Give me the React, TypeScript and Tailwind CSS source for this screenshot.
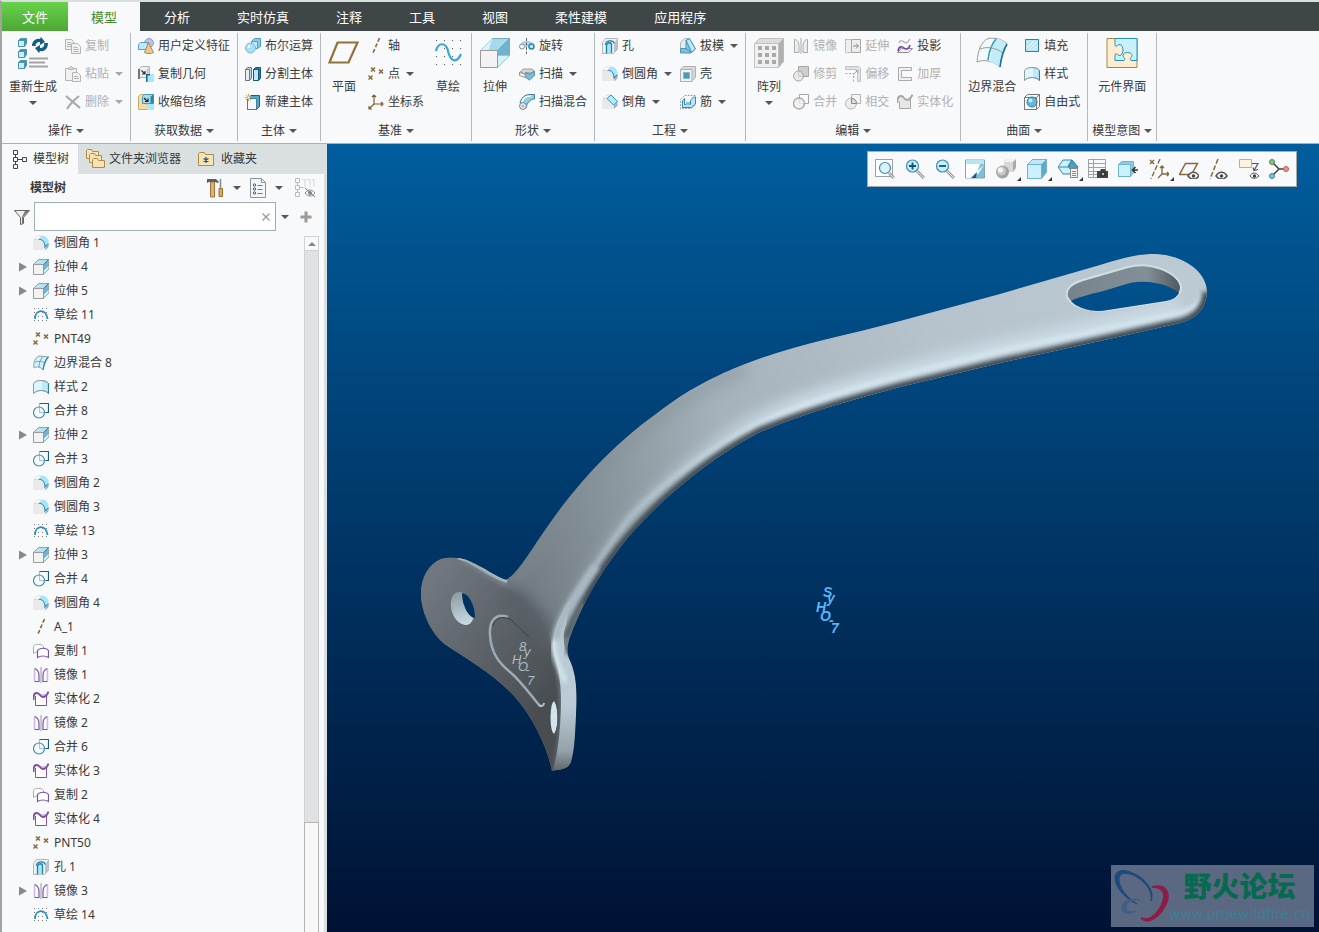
import { useState } from "react";
import type { ReactNode } from "react";

// 16px icons, shared by the ribbon and the model tree
const icons: Record<string, ReactNode> = {
  copy: (
    <g fill="#f1f1f1" stroke="#b4b4b4">
      <path d="M.5 1.500h6l2 2v8h-8z" />
      <path d="M2 4.500h4M2 6.500h4M2 8.500h4" />
      <path d="M6.500 5.500h6l3 3v7h-9z" />
      <path d="M8.500 9.500h4M8.500 11.500h5M8.500 13.500h5" />
    </g>
  ),
  paste: (
    <g fill="#f1f1f1" stroke="#b4b4b4">
      <path d="M.5 2.500h11v12h-11z" />
      <path d="M3.500 3.500v-1.500l2.500-1.500 2.500 1.500v1.500z" fill="#ddd" />
      <path d="M7.500 6.500h5l3 3v6h-8z" />
      <path d="M9 10.500h4M9 12.500h5" />
    </g>
  ),
  remove: <path d="M1 2l14 12M14 2C9 6 5 10 2 15" fill="none" stroke="#a9a9a9" strokeWidth="2.200" />,
  udf: (
    <g>
      <circle cx="11" cy="5" r="4.500" fill="#b9c3ea" stroke="#8f9ccb" />
      <path d="M.5 6.500l2-2h7v7h-9z" fill="#bfe9fa" stroke="#5c9dc0" />
      <path d="M10.500 4.500l5 10c-2 1.500-7 1.500-9 0z" fill="#e8c98f" stroke="#a98a54" />
    </g>
  ),
  copyGeom: (
    <g>
      <path d="M.5 3.500l3-3h8v8l-3 3h-8z" fill="#f0f0f0" stroke="#b0b0b0" />
      <path d="M8.500 3.500l3-3v8h-3z" fill="#c9c9c9" />
      <path d="M0 3h2v10H0z" fill="#6f7478" />
      <path d="M3.500 4.500l3 3M7 5v3H4" fill="none" stroke="#333" strokeWidth="1.200" />
      <path d="M8 8h8v8H8z" fill="#a6e7fb" />
      <path d="M8 8h4v1.500H9.500V16H8z" fill="#14688f" />
    </g>
  ),
  shrink: (
    <g>
      <path d="M.5 2.500l2-2h6v10h4l-2 5h-10z" fill="#f3dca6" stroke="#c9a868" />
      <path d="M4.500 2.500l2-2h9v9h-11z" fill="#a5dbee" stroke="#4a9cc0" />
      <path d="M12.500 2.500l3-2v9h-3z" fill="#2f86ad" />
      <path d="M6 4l3 3M10 4.500v3H7" fill="none" stroke="#222" strokeWidth="1.200" />
      <path d="M9 10h7v6H9z" fill="#a6e7fb" />
    </g>
  ),
  boolean: (
    <g stroke="#4f9ec0">
      <path d="M6.500 3.500l3-3h6v8l-3 2h-6z" fill="#8ccbe4" />
      <path d="M6.500 3.500h6v7h-6z" fill="#c5ecfa" />
      <circle cx="5.500" cy="10" r="5" fill="#a9dff2" stroke="#7fb9d0" />
      <circle cx="4" cy="8.500" r="1.500" fill="#eaf9ff" stroke="none" />
    </g>
  ),
  split: (
    <g stroke="#777">
      <path d="M.5 3.500l2-2h4v11l-2 2h-4z" fill="#b9d2db" />
      <path d="M.5 3.500h4v11h-4z" fill="#e9eff1" />
      <path d="M8.500 3.500l2-2h5v11l-2 2h-5z" fill="#2a7fa8" stroke="#16577a" />
      <path d="M8.500 3.500h5v11h-5z" fill="#bdeafa" stroke="#16577a" />
    </g>
  ),
  newBody: (
    <g>
      <path d="M2.500 4.500l3-3h9v11l-3 3h-9z" fill="#58a6c8" stroke="#195f82" />
      <path d="M2.500 4.500h9v11h-9z" fill="#f4f8fa" stroke="#3c7f9f" />
      <path d="M3.500 0v7M0 3.500h7M1 1l5 5M6 1L1 6" stroke="#ef9a1f" />
      <circle cx="3.500" cy="3.500" r="1.200" fill="#fff2b8" />
    </g>
  ),
  axis: <path d="M11.500 0L4.500 16" fill="none" stroke="#86683a" strokeWidth="1.600" strokeDasharray="4 2" />,
  point: (
    <path
      d="M3 1.500l4 4M7 1.500l-4 4M11 3.500l4 4M15 3.500l-4 4M.5 9.500l4 4M4.500 9.500l-4 4"
      fill="none"
      stroke="#86683a"
      strokeWidth="1.500"
    />
  ),
  csys: (
    <path
      d="M6 1v9h9M6 10l-5 5M4 3l2-2 2 2M13 8l2 2-2 2M1 12v3h3"
      fill="none"
      stroke="#7c5f30"
      strokeWidth="1.200"
    />
  ),
  revolve: (
    <g fill="none">
      <path d="M2 5c3-3 8-3 12 0v6c-3-3-8-3-12 0z" fill="#a8d5e5" />
      <circle cx="3" cy="8.500" r="2.500" fill="#f7f7f7" stroke="#8a8a8a" />
      <circle cx="12.500" cy="8.500" r="2.500" fill="#c8effb" stroke="#2a86ad" strokeWidth="1.500" />
      <path d="M7.500 0v16" stroke="#666" strokeDasharray="3 1.500" />
    </g>
  ),
  sweep: (
    <g stroke="#9a9a9a">
      <path d="M.5 6.500l4-3.500h8l3 2-4 2-5-.500-1 1z" fill="#d4d4d4" />
      <path d="M6 7l5 1 4.500-2.500v4l-5 4.500-4.500-3z" fill="#7fbdd6" stroke="#4b94b3" />
      <path d="M.5 6.500L6 8v3.500L.5 9.500z" fill="#f3f3f3" />
    </g>
  ),
  blend: (
    <g>
      <path d="M1 9C2 4 6 .5 10 .5h5.500V5C11 5 8 9 7 14z" fill="#8fd0e8" stroke="#4a7f98" />
      <path d="M3 8c1-4 4-6 9-6" fill="none" stroke="#fff" strokeWidth="1.500" />
      <circle cx="4" cy="12" r="3.400" fill="#f5f5f5" stroke="#777" />
      <path d="M2.500 12h3M4 10.500v3" stroke="#999" />
    </g>
  ),
  hole: (
    <g>
      <path d="M.5 4.500l3-4h12v11l-4 4h-11z" fill="#eef0f1" stroke="#b5b5b5" />
      <path d="M12 5l3.500-4v10.500L12 15z" fill="#bcc3c7" />
      <path d="M4.500 15.500V6L7 3.500h3L9.500 15.500z" fill="#a9e4f7" />
      <path d="M3.500 7c0-5 8-5.500 8.500-1.500M4.500 15.500V7c1-3 5-3 5 0v8" fill="none" stroke="#1e83ac" strokeWidth="1.300" />
    </g>
  ),
  round: (
    <g>
      <path d="M0 5l5-4h5c4 0 6 4 6 8v1l-4 5H0z" fill="#e9e9e9" />
      <path d="M5 4L9 .5c4 0 7 4 6.500 9L12 12c0-5-3-8-7-8z" fill="#a6e5fb" />
      <path d="M5 4c4 0 7 3 7 8l3.500-3" fill="none" stroke="#2f8fb8" strokeWidth="1.200" />
      <path d="M1 4.500L5 1h4l-4 3.500z" fill="#fff" stroke="#bcd0d8" strokeWidth=".6" />
      <path d="M12.500 12l3-2v2l-3 3.500z" fill="#9fb0b8" />
    </g>
  ),
  chamfer: (
    <g>
      <path d="M0 5l5-4h5l6 7v3l-4 4H0z" fill="#e9e9e9" />
      <path d="M1 4.500L5 1h4L5 4.500z" fill="#fff" stroke="#bcd0d8" strokeWidth=".6" />
      <path d="M5 4.500L9 1l6.500 6.500L11.500 11z" fill="#b5ebfb" stroke="#2f8fb8" />
      <path d="M12 11.500l3.500-3v3L12 15z" fill="#9fb0b8" />
    </g>
  ),
  draft: (
    <g>
      <path d="M.5 4.500l4-4h4v10h-8z" fill="#e9ecee" stroke="#b5b5b5" />
      <path d="M.5 10.500h10l4 .5-3.500 4H.5z" fill="#7fbdd8" stroke="#4d97b6" />
      <path d="M6 2.500l3.500-2 6 10.500-4 3.500z" fill="#b5ebfb" stroke="#3d86a8" />
      <path d="M6 2.500v8l5.500 4z" fill="#8dcce5" stroke="#4d97b6" />
    </g>
  ),
  shell: (
    <g>
      <path d="M.5 3.500l3-3h12v11l-4 4h-11z" fill="#d5d9db" stroke="#b0b0b0" />
      <path d="M.5 3.500h11.500v12H.5z" fill="#f1f1f1" stroke="#b0b0b0" />
      <path d="M3.500 6.500h6v6h-6z" fill="#4c96b8" stroke="#7fb9d0" />
    </g>
  ),
  rib: (
    <g fill="none">
      <path d="M.5 5.500l4-4h11v9l-4 4h-11z" stroke="#8a8a8a" strokeDasharray="1.500 1.500" />
      <path d="M4.500 4.500v6h6v-4l3-3.500h2v7l-4 3.500h-9v-7z" fill="#b7e6f6" stroke="#3b88aa" />
      <path d="M6 8h4v3H6z" fill="#7fc3df" />
    </g>
  ),
  mirrorGray: (
    <g fill="#ededed" stroke="#aaa">
      <path d="M1.500 1.500c3 0 4.500 3 4.500 7v6H1.500zM14.500 1.500c-3 0-4.500 3-4.500 7v6h4.500z" />
      <path d="M8 0v16" />
    </g>
  ),
  trimGray: (
    <g fill="#e3e3e3" stroke="#a5a5a5">
      <path d="M5.500.5h10v10h-10z" fill="#cecece" />
      <circle cx="5.500" cy="10" r="5" fillOpacity=".7" />
    </g>
  ),
  mergeGray: (
    <g fill="none" stroke="#a5a5a5">
      <path d="M6.500.5h9v9h-9z" />
      <circle cx="6" cy="9.500" r="5.500" fill="#eee" fillOpacity=".8" strokeWidth="1.300" />
    </g>
  ),
  extendGray: (
    <g fill="#eee" stroke="#a5a5a5">
      <path d="M.5 1.500h6v13h-6z" strokeDasharray="2 1" />
      <path d="M6.500 1.500h9v13h-9z" />
      <path d="M8 8h5M11 5.500L13.500 8 11 10.500" fill="none" stroke="#888" />
    </g>
  ),
  offsetGray: (
    <g fill="none" stroke="#a5a5a5">
      <path d="M.5.500h13l2 2v13h-3V6c0-2-1-2.500-3-2.500h-9z" fill="#e2e2e2" stroke="#c2c2c2" />
      <path d="M.5 7.500h8v8" strokeDasharray="2 1.500" />
      <path d="M8.500 8.500l4-4M10.500 4.500h2.500v2.500" />
    </g>
  ),
  intersectGray: (
    <g stroke="#b5b5b5">
      <path d="M6.500.5h9v9h-9z" fill="#f4f4f4" />
      <circle cx="6" cy="9.500" r="5.500" fill="#ececec" />
      <path d="M6.500 4.500v5h5c0-3-2-5-5-5z" fill="#ddd" stroke="#888" />
    </g>
  ),
  project: (
    <g fill="none">
      <path d="M2 5c1-3 3-3 5-1s4 0 6-3" stroke="#b0b0b0" strokeWidth="1.300" />
      <path d="M.5 14.500l4-4h11l-4 4z" fill="#eee" stroke="#8d8d8d" />
      <path d="M1 13c1-5 4-5 6-3s5 1 6-3" stroke="#7446b0" strokeWidth="1.600" />
    </g>
  ),
  thickenGray: (
    <path d="M1.500 1.500h13v3h-10v7h10v3h-13z" fill="#f0f0f0" stroke="#aaa" />
  ),
  solidGray: (
    <g fill="#e6e6e6" stroke="#a5a5a5">
      <path d="M2.500 5v9.500h11V5" />
      <path d="M.5 9V6C1 1 5 1 7 4s6 3 8.500-3.500" strokeWidth="1.800" />
    </g>
  ),
  fill: (
    <g>
      <path d="M1.500 1.500h13v12h-13z" fill="#b6e8f9" stroke="#2683aa" />
      <path d="M3 10l7-7M5 12l8-8M9 12l4-4" stroke="#eefbff" />
    </g>
  ),
  style: (
    <g>
      <path d="M.5 4.500C3 .5 13 .5 15.500 4.500v10c-3-4-12-4-15 0z" fill="#bdeafa" stroke="#8b9ba3" />
      <path d="M.5 14.500v-10C3 .5 8 1 9 2v9c-3-.5-6 1-8.500 3.500z" fill="#dff5fd" />
      <path d="M15.500 4v11" stroke="#2d81a4" strokeWidth="1.300" />
      <path d="M.5 4.500C3 .5 13 .5 15.500 4.500M.5 4.500v10c3-4 12-4 15 0" fill="none" stroke="#8b9ba3" />
    </g>
  ),
  freestyle: (
    <g fill="none" stroke="#777">
      <circle cx="8" cy="8" r="5" fill="#5fb7da" stroke="#2c83a8" />
      <circle cx="6.500" cy="6.500" r="2" fill="#c8f0ff" stroke="none" />
      <path d="M.5 3.500l3-3h12v12l-3 3H.5zM.5 3.500h12v12M12.500 3.500l3-3" />
    </g>
  ),
  extrude: (
    <g>
      <path d="M.5 5.500l5-5h10v10l-5 5z" fill="#b7e2f2" stroke="#8aa7b3" />
      <path d="M10.500 5.500l5-5v10l-5 5z" fill="#6fb3d0" stroke="#8aa7b3" />
      <path d="M10.500 15l5-5v-3l-5 5z" fill="#d3f2fb" />
      <path d="M.5 5.500h10v10H.5z" fill="#f2f2f2" stroke="#9a9a9a" />
      <path d="M15.500.5l-5 5" stroke="#2c7ea1" />
    </g>
  ),
  sketch: (
    <g>
      <path d="M1 1.500h14M1 5.500h14M1 9.500h14M1 13.500h14" stroke="#777" strokeDasharray="1 3" />
      <path d="M2 12C2 2 13 1 14.500 12" fill="none" stroke="#2a8fc0" strokeWidth="1.800" />
    </g>
  ),
  boundary: (
    <g fill="none">
      <path d="M1 13C0 7 2 3 6 1l9.500 1C12 5 11 9 10 15 8 12 4 11 1 13z" fill="#d3f1fa" stroke="#8aa2ad" />
      <path d="M10 1.500C7 5 6 8 6 12.500M2 7c4-1 7-1 10 1" stroke="#6fa5bb" />
      <path d="M15.500 2C12 5 11 9 10 15" stroke="#2a82a8" strokeWidth="1.200" />
    </g>
  ),
  merge: (
    <g fill="none">
      <path d="M6.500.5h9v9h-9z" stroke="#9fc6d6" />
      <path d="M6.500.5h9v9h-3" stroke="#155f86" strokeWidth="1.200" />
      <circle cx="6" cy="9.500" r="5.500" stroke="#3e8cb0" strokeWidth="1.200" />
    </g>
  ),
  copied: (
    <g fill="#fff">
      <path d="M.5 10.500v-7c2-3 8-3 10 0v7c-3-2-8-2-10 0z" stroke="#aaa" />
      <path d="M4.500 14.500v-7c2-3 9-3 11 0v7c-3-2-8-2-11 0z" stroke="#7b55a3" strokeWidth="1.200" />
    </g>
  ),
  mirror: (
    <g fill="none" stroke="#7b55a3">
      <path d="M1.500 14V2.500M14.500 14V2.500" stroke="#cbb9ea" strokeWidth="1.500" />
      <path d="M1.500 1.500c3 1 4.500 3 4.500 7v6H1.500M14.500 1.500c-3 1-4.500 3-4.500 7v6h4.500" strokeWidth="1.200" />
      <path d="M8 0v16" stroke="#999" />
    </g>
  ),
  solid: (
    <g fill="none" stroke="#7b55a3">
      <path d="M2.500 5v9.500h11V5" fill="#fff" />
      <path d="M7 3h7c-1 4-5 4-7 1z" fill="#d3c2ef" stroke="none" />
      <path d="M.5 9V6C1 1 5 1 7 4s6 3 8.500-3.500" strokeWidth="2" />
    </g>
  ),
};

// 32px icons for the big ribbon buttons
const bigIcons: Record<string, ReactNode> = {
  regen: (
    <g>
      {[1, 12, 23].map((y) => (
        <g key={y} transform={`translate(1 ${y})`} stroke="#4d93b2">
          <path d="M.5 2.500l2-2h6v5l-2 3h-6z" fill="#3f8fb3" />
          <path d="M.5 2.500h6v6h-6z" fill="#c4eefb" />
        </g>
      ))}
      <path d="M15 9C15 4 19 1 23 2l1-2 4 5-5 3v-3c-3 0-5 2-4 4z" fill="#155f80" />
      <path d="M31 6c0 6-4 9-8 8l-1 2-4-5 5-3v3c3 0 5-2 4-5z" fill="#155f80" />
      <path d="M12 21.500h19M12 25.500h16M12 29.500h19" stroke="#a3a3a3" strokeWidth="2" />
    </g>
  ),
  plane: <path d="M9.500 5.500h20l-9 20h-19z" fill="none" stroke="#92713a" strokeWidth="2.200" />,
  sketch: (
    <g>
      <path d="M4 3.500h26M4 11.500h26M4 19.500h26M4 27.500h26" stroke="#555" strokeDasharray="1 7" />
      <path d="M4 14C6 5 14 5 16 14s8 14 13 3" fill="none" stroke="#3aa6d8" strokeWidth="2.200" />
    </g>
  ),
  extrude: (
    <g>
      <path d="M1.500 13.500l12-12h17v17l-12 12z" fill="#aadff2" stroke="#77aabd" />
      <path d="M18.500 13.500l12-12v17h-12z" fill="#70b3cf" />
      <path d="M18.500 18.500h12l-12 12z" fill="#d3f2fb" stroke="#9ac5d4" />
      <path d="M13.500 1.500l-12 12h17l12-12z" fill="#a5daec" stroke="#77aabd" />
      <path d="M13.500 1.500l-12 12h8z" fill="#daf3fb" />
      <path d="M1.500 13.500h17v17h-17z" fill="#f3f3f3" stroke="#999" />
    </g>
  ),
  pattern: (
    <g>
      <path d="M1.500 6.500l5-5h24v23l-5 6h-24z" fill="#dcdcdc" stroke="#c2c2c2" />
      <path d="M25.500 6.500l5-5v23l-5 6z" fill="#b0b0b0" />
      <path d="M1.500 6.500h24v24h-24z" fill="#f0f0f0" stroke="#c2c2c2" />
      {[9, 16, 23].map((y) => (
        <path key={y} d={`M5 ${y}h4v4H5zM12 ${y}h4v4h-4zM19 ${y}h4v4h-4z`} fill="#a9a9a9" />
      ))}
    </g>
  ),
  boundary: (
    <g fill="none">
      <path d="M1 25C2 13 5 5 12 1.500c6-1 13 0 19 5C27 14 25 21 24 30 17 24 8 22 1 25z" fill="#f3f8fa" stroke="#9a9a9a" />
      <path d="M21 2c4 0 7 2 10 5-4 7-6 14-7 23-3-2-6-4-10-5 1-10 3-18 7-23z" fill="#c3ecf9" />
      <path d="M20 2c-5 6-7 13-8 21" stroke="#2a9cc6" strokeWidth="1.600" />
      <path d="M4 12c8-3 16-1 23 4" stroke="#9a9a9a" />
      <path d="M31 7c-4 7-6 14-7 23" stroke="#1d6f94" strokeWidth="1.600" />
    </g>
  ),
  component: (
    <g>
      <path d="M1 1.500h30v29H1z" fill="#fdeccd" stroke="#a8834b" />
      <path
        d="M9 1.500h22v22h-6c-2-2 1-3 1-5 0-4-9-4-9 0 0 2 3 3 1 5H9v-6c2-2 2 1 5 1 4-1 4-10 0-11-3 0-3 3-5 1z"
        fill="#c9f1fd"
        stroke="#2a8fb8"
      />
    </g>
  ),
};

const graphicsTools: { label: string; menu?: boolean; icon: ReactNode }[] = [
  {
    label: "重新调整",
    icon: (
      <g fill="none">
        <path d="M.5.500h17v17H.5z" fill="#fff" stroke="#9f9f9f" />
        <path d="M14 14l5 5" stroke="#999" strokeWidth="3" />
        <path d="M14 14l5 5" stroke="#eee" />
        <circle cx="10" cy="9" r="5.500" fill="#d8f3fc" stroke="#3a8cb0" strokeWidth="1.200" />
      </g>
    ),
  },
  {
    label: "放大",
    icon: (
      <g fill="none">
        <path d="M12 12l7 7" stroke="#999" strokeWidth="3" />
        <path d="M12 12l7 7" stroke="#eee" />
        <circle cx="7.500" cy="7" r="6" fill="#c7eefb" stroke="#3a8cb0" strokeWidth="1.200" />
        <path d="M4 7h7M7.500 3.500v7" stroke="#0e5375" strokeWidth="1.800" />
      </g>
    ),
  },
  {
    label: "缩小",
    icon: (
      <g fill="none">
        <path d="M12 12l7 7" stroke="#999" strokeWidth="3" />
        <path d="M12 12l7 7" stroke="#eee" />
        <circle cx="7.500" cy="7" r="6" fill="#c7eefb" stroke="#3a8cb0" strokeWidth="1.200" />
        <path d="M4 7h7" stroke="#0e5375" strokeWidth="1.800" />
      </g>
    ),
  },
  {
    label: "重画",
    icon: (
      <g>
        <path d="M.5 1h19v18H.5z" fill="#7fc0d9" stroke="#7fa3b1" />
        <path d="M1 5h14c-1 5-4 9-8 14H1z" fill="#fff" />
        <path d="M19 6l-8 7-3 5 5-3z" fill="#eef9fd" />
        <path d="M12 13l-6 6h5z" fill="#155f86" />
        <path d="M1 1h18v4H1z" fill="#b9e4f2" />
      </g>
    ),
  },
  {
    label: "渲染",
    menu: true,
    icon: (
      <g>
        <path d="M8 3l3-3h9v9l-3 4H8z" fill="#a9a9a9" />
        <path d="M8 3l3-3h9l-3 3z" fill="#f2f2f2" />
        <path d="M8 3h9v10H8z" fill="#d8d8d8" />
        <circle cx="6.500" cy="13" r="6.500" fill="#a3a3a3" />
        <circle cx="5.500" cy="12" r="4.500" fill="#c9c9c9" />
        <circle cx="4.500" cy="11" r="2.500" fill="#f4f4f4" />
      </g>
    ),
  },
  {
    label: "显示样式",
    menu: true,
    icon: (
      <g stroke="#6fb3cf">
        <path d="M.5 5.500l5-5h14v13l-5 6H.5z" fill="#62a9c6" />
        <path d="M.5 5.500l5-5h14l-5 5z" fill="#bce8f7" />
        <path d="M.5 5.500h14v14H.5z" fill="#c9f0fc" />
      </g>
    ),
  },
  {
    label: "已保存方向",
    menu: true,
    icon: (
      <g stroke="#3b86a8">
        <path d="M5 1h9l6 7-4 7H5L0 8z" fill="#c9f0fc" />
        <path d="M14 1l6 8-8 1-2-3z" fill="#4f9fc2" />
        <path d="M0 8h11l3-7" fill="none" />
        <path d="M12.500 9.500h7v9h-7z" fill="#f4f4f4" stroke="#888" />
        <path d="M14 12.500h4M14 14.500h4M14 16.500h4" stroke="#888" />
      </g>
    ),
  },
  {
    label: "视图管理器",
    icon: (
      <g fill="none" stroke="#a0a0a0">
        <path d="M.5.500h17v18H.5zM.5 4.500h17M.5 8.500h17M.5 12.500h17M.5 15.500h10M5.500.500v18" />
        <path d="M9 12h3l1-2h4l1 2h2v7H9z" fill="#444" stroke="none" />
        <circle cx="15" cy="15" r="2" fill="#bbb" stroke="#111" />
      </g>
    ),
  },
  {
    label: "剖面",
    icon: (
      <g>
        <path d="M.5 5.500l3-3h12v11l-3 4H.5z" fill="#8ccbe4" stroke="#6fb3cf" />
        <path d="M.5 5.500h12v12H.5z" fill="#c9f0fc" stroke="#6fb3cf" />
        <path d="M20 11h-5M17.500 8l-3 3 3 3" fill="none" stroke="#333" strokeWidth="1.600" />
      </g>
    ),
  },
  {
    label: "基准显示",
    menu: true,
    icon: (
      <g fill="none" stroke="#86683a" strokeWidth="1.400">
        <path d="M1 1l4 4M5 1L1 5" />
        <path d="M11 0L2 20" strokeDasharray="5 2" />
        <path d="M13 7v8h7M13 15l-4 4M11 9l2-2 2 2M18 13l2 2-2 2" />
      </g>
    ),
  },
  {
    label: "平面显示",
    icon: (
      <g fill="none" stroke="#86683a" strokeWidth="1.500">
        <path d="M6.500 4.500h12l-6 11h-12z" />
        <path d="M9 17c3-5 8-5 11 0-3 4-8 4-11 0z" fill="#fff" stroke="#555" />
        <circle cx="14.500" cy="17" r="1.800" fill="#444" stroke="none" />
      </g>
    ),
  },
  {
    label: "轴显示",
    icon: (
      <g fill="none" stroke="#86683a" strokeWidth="1.500">
        <path d="M9 0L1 20" strokeDasharray="5 2" />
        <path d="M7 17c3-5 8-5 11 0-3 4-8 4-11 0z" fill="#fff" stroke="#555" />
        <circle cx="12.500" cy="17" r="1.800" fill="#444" stroke="none" />
      </g>
    ),
  },
  {
    label: "注释显示",
    icon: (
      <g fill="none">
        <path d="M.5.500h12v8H.5z" fill="#fdf3de" stroke="#c5ab80" />
        <path d="M13 4.500h6l-4 7M14 8.500l1 3 4-1" stroke="#555" strokeWidth="1.200" />
        <path d="M11 17c2-4 6-4 9 0-3 3-7 3-9 0z" fill="#fff" stroke="#555" />
        <circle cx="15.500" cy="17" r="1.800" fill="#444" />
      </g>
    ),
  },
  {
    label: "旋转中心",
    icon: (
      <g>
        <path d="M3 3l7 7h7M10 10l-7 7" fill="none" stroke="#444" strokeWidth="1.500" />
        <circle cx="3" cy="3" r="2.500" fill="#8cc08a" stroke="#4a8a4e" />
        <circle cx="3" cy="17" r="2.500" fill="#7fc0e0" stroke="#3a83a8" />
        <circle cx="17" cy="10" r="2.500" fill="#f1948b" stroke="#c3554e" />
      </g>
    ),
  },
];

const tabs = ["分析", "实时仿真", "注释", "工具", "视图", "柔性建模", "应用程序"];

const treeItems = [
  { icon: "round", label: "倒圆角 1" },
  { icon: "extrude", label: "拉伸 4", open: true },
  { icon: "extrude", label: "拉伸 5", open: true },
  { icon: "sketch", label: "草绘 11" },
  { icon: "point", label: "PNT49" },
  { icon: "boundary", label: "边界混合 8" },
  { icon: "style", label: "样式 2" },
  { icon: "merge", label: "合并 8" },
  { icon: "extrude", label: "拉伸 2", open: true },
  { icon: "merge", label: "合并 3" },
  { icon: "round", label: "倒圆角 2" },
  { icon: "round", label: "倒圆角 3" },
  { icon: "sketch", label: "草绘 13" },
  { icon: "extrude", label: "拉伸 3", open: true },
  { icon: "merge", label: "合并 4" },
  { icon: "round", label: "倒圆角 4" },
  { icon: "axis", label: "A_1" },
  { icon: "copied", label: "复制 1" },
  { icon: "mirror", label: "镜像 1" },
  { icon: "solid", label: "实体化 2" },
  { icon: "mirror", label: "镜像 2" },
  { icon: "merge", label: "合并 6" },
  { icon: "solid", label: "实体化 3" },
  { icon: "copied", label: "复制 2" },
  { icon: "solid", label: "实体化 4" },
  { icon: "point", label: "PNT50" },
  { icon: "hole", label: "孔 1" },
  { icon: "mirror", label: "镜像 3", open: true },
  { icon: "sketch", label: "草绘 14" },
];

function Icon({ name }: { name: string }) {
  return (
    <svg viewBox="0 0 16 16" className="size-4 shrink-0" aria-hidden="true">
      {icons[name]}
    </svg>
  );
}

function Caret({ muted }: { muted?: boolean }) {
  return (
    <svg viewBox="0 0 8 8" className="size-2 shrink-0" aria-hidden="true">
      <path d="M0 2h8L4 6z" fill={muted ? "#a8a8a8" : "#555"} />
    </svg>
  );
}

function Group({ title, children }: { title: string; children: ReactNode }) {
  return (
    <section className="my-[2px] flex shrink-0 flex-col border-r border-[#b3b9bc]">
      <div className="flex h-[87px] shrink-0 justify-center gap-2 px-[7px]">{children}</div>
      <button className="flex flex-1 items-center justify-center gap-1 px-1">
        {title}
        <Caret />
      </button>
    </section>
  );
}

function Big({ icon, label, menu }: { icon: string; label: string; menu?: boolean }) {
  return (
    <button className="flex min-w-8 flex-col items-center self-start pt-1">
      <svg viewBox="0 0 32 32" className="size-8" aria-hidden="true">
        {bigIcons[icon]}
      </svg>
      <span className="mt-[10px] leading-4">{label}</span>
      {menu && (
        <span className="mt-1">
          <Caret />
        </span>
      )}
    </button>
  );
}

function Column({ children }: { children: ReactNode }) {
  return <div className="-mt-px flex flex-col self-start">{children}</div>;
}

function Small({ icon, label, menu, off }: { icon: string; label: string; menu?: boolean; off?: boolean }) {
  return (
    <button disabled={off} className="flex h-7 items-center gap-1 text-[#3a3a3a] disabled:text-[#b1b1b1]">
      <Icon name={icon} />
      {label}
      {menu && (
        <span className="ml-[2px]">
          <Caret muted={off} />
        </span>
      )}
    </button>
  );
}

function Ribbon() {
  return (
    <div className="flex h-[113px] overflow-hidden border-b border-[#a9b3b5] bg-[#f8f9fb]">
      <Group title="操作">
        <Big icon="regen" label="重新生成" menu />
        <Column>
          <Small icon="copy" label="复制" off />
          <Small icon="paste" label="粘贴" menu off />
          <Small icon="remove" label="删除" menu off />
        </Column>
      </Group>
      <Group title="获取数据">
        <Column>
          <Small icon="udf" label="用户定义特征" />
          <Small icon="copyGeom" label="复制几何" />
          <Small icon="shrink" label="收缩包络" />
        </Column>
      </Group>
      <Group title="主体">
        <Column>
          <Small icon="boolean" label="布尔运算" />
          <Small icon="split" label="分割主体" />
          <Small icon="newBody" label="新建主体" />
        </Column>
      </Group>
      <Group title="基准">
        <Big icon="plane" label="平面" />
        <Column>
          <Small icon="axis" label="轴" />
          <Small icon="point" label="点" menu />
          <Small icon="csys" label="坐标系" />
        </Column>
        <Big icon="sketch" label="草绘" />
      </Group>
      <Group title="形状">
        <Big icon="extrude" label="拉伸" />
        <Column>
          <Small icon="revolve" label="旋转" />
          <Small icon="sweep" label="扫描" menu />
          <Small icon="blend" label="扫描混合" />
        </Column>
      </Group>
      <Group title="工程">
        <Column>
          <Small icon="hole" label="孔" />
          <Small icon="round" label="倒圆角" menu />
          <Small icon="chamfer" label="倒角" menu />
        </Column>
        <Column>
          <Small icon="draft" label="拔模" menu />
          <Small icon="shell" label="壳" />
          <Small icon="rib" label="筋" menu />
        </Column>
      </Group>
      <Group title="编辑">
        <Big icon="pattern" label="阵列" menu />
        <Column>
          <Small icon="mirrorGray" label="镜像" off />
          <Small icon="trimGray" label="修剪" off />
          <Small icon="mergeGray" label="合并" off />
        </Column>
        <Column>
          <Small icon="extendGray" label="延伸" off />
          <Small icon="offsetGray" label="偏移" off />
          <Small icon="intersectGray" label="相交" off />
        </Column>
        <Column>
          <Small icon="project" label="投影" />
          <Small icon="thickenGray" label="加厚" off />
          <Small icon="solidGray" label="实体化" off />
        </Column>
      </Group>
      <Group title="曲面">
        <Big icon="boundary" label="边界混合" />
        <Column>
          <Small icon="fill" label="填充" />
          <Small icon="style" label="样式" />
          <Small icon="freestyle" label="自由式" />
        </Column>
      </Group>
      <Group title="模型意图">
        <Big icon="component" label="元件界面" />
      </Group>
    </div>
  );
}

function ModelTree() {
  const [filter, setFilter] = useState("");

  return (
    <aside className="flex w-[325px] shrink-0 flex-col border-r-[3px] border-[#dae0df] bg-[#f8f9fb]">
      {/* Navigator tabs */}
      <div className="-mr-[3px] flex h-[30px] shrink-0 bg-[#dae0df]">
        <button className="flex items-center gap-[6px] bg-[#f8f9fb] pr-[9px] pl-[10px]">
          <svg viewBox="0 0 15 20" className="h-5 w-[15px]" fill="none" stroke="#444" aria-hidden="true">
            <path d="M1.500 1.500h4v4h-4zM1.500 8.500h4v4h-4zM1.500 15.500h4v4h-4zM10.500 8.500h4v4h-4zM3.500 5.500v3M3.500 12.500v3M5.500 10.500h5" />
          </svg>
          模型树
        </button>
        <button className="flex items-center gap-1 px-2">
          <svg viewBox="0 0 19 20" className="h-5 w-[19px]" fill="#f8e3b4" stroke="#b08c4c" aria-hidden="true">
            <path d="M.5 9.500v-8l1-1h4l1 2h6v7z" />
            <path d="M3.500 13.500v-8l1-1h4l1 2h6v7z" />
            <path d="M6.500 18.500v-8l1-1h4l1 2h6v7z" />
          </svg>
          文件夹浏览器
        </button>
        <button className="flex items-center gap-[6px] px-2">
          <svg viewBox="0 0 18 16" className="h-4 w-[18px]" aria-hidden="true">
            <path d="M1.500 14.500v-12l1-1h5l1 2h8v11z" fill="#f8e3b4" stroke="#b08c4c" />
            <path d="M9 6v6M6.500 7.500l5 3M11.500 7.500l-5 3" stroke="#155f86" strokeWidth="1.300" />
          </svg>
          收藏夹
        </button>
      </div>

      {/* Tree header */}
      <div className="flex h-7 shrink-0 items-center pr-[9px] pl-7">
        <h2 className="font-bold">模型树</h2>
        <button className="ml-auto flex items-center gap-[9px]" aria-label="设置">
          <svg viewBox="0 0 18 20" className="h-5 w-[18px]">
            <path d="M1 1h9l3 3-1 1-3-1H3L1 5z" fill="#555f68" />
            <path d="M4.500 4h4v15h-4z" fill="#dfb271" stroke="#a07438" />
            <path d="M14.500 1v9" stroke="#888" strokeWidth="1.500" />
            <path d="M13 10.500h3.500v8H13z" fill="#dfa757" stroke="#9a6e32" />
          </svg>
          <Caret />
        </button>
        <button className="ml-[9px] flex items-center gap-2" aria-label="显示">
          <svg viewBox="0 0 17 20" className="h-5 w-[17px]" fill="none" stroke="#8795a0">
            <path d="M.5.500h11l4 4v15H.5z" fill="#f3f7f9" />
            <path d="M11.500.500v4h4" />
            <circle cx="4.500" cy="7" r="1.200" stroke="#555" />
            <circle cx="4.500" cy="11" r="1.200" stroke="#555" />
            <circle cx="4.500" cy="15" r="1.200" stroke="#555" />
            <path d="M7.500 7.500h5M7.500 11.500h5M7.500 15.500h5" stroke="#777" />
          </svg>
          <Caret />
        </button>
        <button className="ml-3" aria-label="隐藏">
          <svg viewBox="0 0 20 20" className="size-5" fill="none" stroke="#bbb">
            <path d="M.5.500h4v4h-4zM.5 7.500h4v4h-4zM.5 14.500h4v4h-4zM2.500 4.500v3M2.500 11.500v3M4.500 9.500h4" />
            <path d="M7 1.500h3v8M12 1.500h3v6M17 1.500h2v7" stroke="#d5d5d5" />
            <path d="M10 15c3-4 7-4 10 0-3 4-7 4-10 0z" stroke="#888" />
            <circle cx="15" cy="15" r="2" fill="#888" stroke="none" />
            <path d="M10 10l10 9" stroke="#777" />
          </svg>
        </button>
      </div>

      {/* Filter */}
      <div className="flex h-[29px] shrink-0 items-center px-3">
        <svg viewBox="0 0 16 16" className="mr-1 size-4 shrink-0" aria-hidden="true">
          <path d="M.5 1.500h15l-6 7v6l-3 1v-7z" fill="#eee" stroke="#666" />
          <path d="M11 2h4L9 8v6H8V8z" fill="#777" />
        </svg>
        <div className="flex h-[29px] min-w-0 flex-1 items-center border border-[#9fb0b0] bg-white pr-1">
          <input
            aria-label="筛选模型树"
            value={filter}
            onChange={(e) => setFilter(e.target.value)}
            className="h-full min-w-0 flex-1 px-2 outline-none"
          />
          <button aria-label="清除" onClick={() => setFilter("")}>
            <svg viewBox="0 0 10 10" className="size-[10px]">
              <path d="M1.500 1.500l7 7M8.500 1.500l-7 7" stroke="#999" strokeWidth="1.300" />
            </svg>
          </button>
        </div>
        <button className="ml-[5px] flex" aria-label="筛选选项">
          <Caret />
        </button>
        <button className="ml-[11px]" aria-label="添加">
          <svg viewBox="0 0 12 12" className="size-3">
            <path d="M6 .500v11M.5 6h11" stroke="#9a9a9a" strokeWidth="3" />
          </svg>
        </button>
      </div>

      <div className="flex min-h-0 flex-1">
        <ul className="min-w-0 flex-1 overflow-hidden">
          {treeItems.map((item) => (
            <li key={item.label} className="h-6">
              <button className="flex h-6 items-center gap-[5px] pl-4">
                <svg viewBox="0 0 10 10" className="size-[10px]" aria-hidden="true">
                  {item.open && <path d="M1 .500L9 5 1 9.500z" fill="#888" />}
                </svg>
                <Icon name={item.icon} />
                {item.label}
              </button>
            </li>
          ))}
        </ul>
        {/* Scroll bar */}
        <div className="mt-[5px] mr-[5px] flex w-[15px] flex-col border-x border-[#d0d2d3] bg-[#e0e1e3]">
          <button
            className="flex h-[15px] items-center justify-center border-y border-[#d0d2d3] bg-[#f8f9fb]"
            aria-label="向上滚动"
          >
            <svg viewBox="0 0 8 8" className="size-2">
              <path d="M0 6h8L4 2z" fill="#888" />
            </svg>
          </button>
          <div className="h-[82%]" />
          <div className="-mx-px flex-1 border-x border-t border-[#b5b5b5] bg-[#f8f8f8]" />
        </div>
      </div>
    </aside>
  );
}

const ARM =
  "M506 580C518 574 534 545 550 523C577 484 615 443 656 414C688 389 715 376 745 364C790 346 840 337 900 321L1000 294L1100 265C1125 257 1140 254 1155 254C1184 255 1207 272 1207 292C1206 308 1198 318 1180 323L1100 341L1000 363L900 387C850 400 800 415 760 432C715 455 672 490 640 524C610 556 585 596 570 637C566 648 567 655 571 663C577 678 577 695 576 715C575 740 574 752 571 762C568 770 560 769 552 771C548 750 535 720 515 697C495 675 470 661 446 645C430 633 421 610 421 594C421 577 429 564 441 559C450 557 462 557 471 562C483 567 498 578 506 580Z";

function PartModel() {
  return (
    <svg viewBox="327 144 992 788" className="h-full w-full" role="img" aria-label="零件模型">
      <defs>
        <linearGradient id="sky" gradientUnits="userSpaceOnUse" x1="0" y1="144" x2="0" y2="932">
          <stop offset="0" stopColor="#005e9e" />
          <stop offset="1" stopColor="#001234" />
        </linearGradient>
        <linearGradient id="armFill" gradientUnits="userSpaceOnUse" x1="530" y1="620" x2="1200" y2="280">
          <stop offset="0" stopColor="#6f7a81" />
          <stop offset="0.150" stopColor="#87939a" />
          <stop offset="0.350" stopColor="#a5b2bb" />
          <stop offset="0.650" stopColor="#b6c3cd" />
          <stop offset="1" stopColor="#bccad4" />
        </linearGradient>
        <linearGradient id="bandFill" gradientUnits="userSpaceOnUse" x1="560" y1="620" x2="800" y2="400">
          <stop offset="0" stopColor="#a9b8c1" stopOpacity=".3" />
          <stop offset="0.500" stopColor="#b9c9d3" stopOpacity=".6" />
          <stop offset="1" stopColor="#cbdbe5" />
        </linearGradient>
        <linearGradient id="rimFill" gradientUnits="userSpaceOnUse" x1="560" y1="640" x2="780" y2="410">
          <stop offset="0" stopColor="#a5b5bf" />
          <stop offset="0.500" stopColor="#b5c5ce" />
          <stop offset="1" stopColor="#d8e9f2" />
        </linearGradient>
        <linearGradient id="plateFill" gradientUnits="userSpaceOnUse" x1="425" y1="590" x2="560" y2="690">
          <stop offset="0" stopColor="#70777e" />
          <stop offset="0.500" stopColor="#5c6268" />
          <stop offset="1" stopColor="#484d50" />
        </linearGradient>
        <linearGradient id="sideFill" gradientUnits="userSpaceOnUse" x1="0" y1="640" x2="0" y2="770">
          <stop offset="0" stopColor="#b9cad4" />
          <stop offset="0.500" stopColor="#bccbd5" />
          <stop offset="0.850" stopColor="#94a2ab" />
          <stop offset="1" stopColor="#606970" />
        </linearGradient>
        <linearGradient id="slotWall" gradientUnits="userSpaceOnUse" x1="1067" y1="0" x2="1181" y2="0">
          <stop offset="0" stopColor="#77838b" />
          <stop offset="0.700" stopColor="#839097" />
          <stop offset="1" stopColor="#4e575c" />
        </linearGradient>
        <linearGradient id="holeWall" x1="0" y1="0" x2="0" y2="1">
          <stop offset="0" stopColor="#8e9ba3" />
          <stop offset="1" stopColor="#cbdce6" />
        </linearGradient>
        <filter id="soft2" x="-20%" y="-20%" width="140%" height="140%">
          <feGaussianBlur stdDeviation="2" />
        </filter>
        <filter id="soft6" x="-20%" y="-20%" width="140%" height="140%">
          <feGaussianBlur stdDeviation="7" />
        </filter>
        <clipPath id="armClip">
          <path d={ARM} />
        </clipPath>
      </defs>

      <path d={ARM} fill="url(#armFill)" />
      <g clipPath="url(#armClip)" fill="none">
        {/* lower bright band and the rolled dark edge under it */}
        <path
          d="M572 618C588 580 610 548 640 515C672 481 715 444 760 420C800 402 850 388 900 374L1000 349L1100 327L1180 308"
          stroke="url(#bandFill)"
          strokeWidth="18"
          filter="url(#soft6)"
        />
        <path
          d="M556 640C570 602 596 562 630 517C664 481 712 447 760 422C800 405 850 389 900 376L1000 351L1100 330L1180 313C1194 309 1201 302 1203 294"
          stroke="url(#rimFill)"
          strokeWidth="4"
          filter="url(#soft2)"
        />
        <path
          d="M569 638C585 596 610 556 640 524C672 490 715 455 760 432C800 415 850 400 900 387L1000 363L1100 341L1180 323C1198 318 1206 308 1207 292"
          stroke="#434c52"
          strokeWidth="9"
          filter="url(#soft2)"
        />
        <path
          d="M508 586C520 574 540 545 552 527C580 488 618 447 658 418C690 394 715 381 745 368"
          stroke="#7f8b92"
          strokeWidth="14"
          opacity=".45"
          filter="url(#soft6)"
        />
        {/* mounting plate */}
        <path
          d="M415 590L425 550L480 566L506 588C528 602 547 622 554 652C562 680 562 740 552 780L415 700Z"
          fill="url(#plateFill)"
          filter="url(#soft2)"
        />
        <path d="M506 592C530 606 546 624 552 650" stroke="#596167" strokeWidth="18" filter="url(#soft6)" />
        <path d="M458 557C475 561 490 577 507 581" stroke="#b7c7d1" strokeWidth="4" />
        <path d="M462 561C476 564 490 579 506 584" stroke="#7d8990" strokeWidth="3" filter="url(#soft2)" />
        <path
          d="M566 625C560 640 567 654 571 663C577 678 577 695 576 715C575 740 574 752 571 762L566 770H553C558 755 561 725 561 700C561 680 558 668 554 655C550 640 555 622 570 600Z"
          fill="url(#sideFill)"
        />
        <path d="M596 566C580 588 556 622 556 640" stroke="#a9b9c3" strokeWidth="8" filter="url(#soft2)" />
        <path d="M554 640C551 652 560 668 565 682" stroke="#d6e6ef" strokeWidth="5" filter="url(#soft2)" />
        <path d="M584 604C572 628 566 645 568 655" stroke="#6e7b83" strokeWidth="5" filter="url(#soft2)" />
      </g>

      {/* slot at the far end */}
      <path
        d="M1067 297C1065 288 1073 283 1083 280L1128 267C1150 261 1178 272 1181 287C1181 295 1175 299 1166 301L1108 310C1090 313 1072 307 1067 297Z"
        fill="url(#slotWall)"
        stroke="#cfdfe8"
        strokeWidth="2"
      />
      <path
        d="M1071 301C1076 298 1090 294 1100 292L1130 283C1150 279 1170 285 1179 293C1176 298 1172 300 1166 301L1108 310C1092 313 1077 308 1071 301Z"
        fill="url(#sky)"
      />

      {/* left hole */}
      <ellipse cx="462.500" cy="608.500" rx="11" ry="17" transform="rotate(-18 462.500 608.500)" fill="url(#holeWall)" />
      <path d="M462 593C469 594 475 604 475 618C469 618 462 606 462 593Z" fill="url(#sky)" />

      {/* recessed pad with the part number */}
      <path
        d="M508 617C496 613 489 620 490 635C491 653 499 663 510 672C521 681 532 697 540 706"
        fill="none"
        stroke="#9dabb4"
        strokeWidth="2.500"
      />
      <path d="M493 626C495 617 502 616 510 619L529 637" fill="none" stroke="#3a4146" />
      <path d="M539 705C541 707 544 706 544 703" fill="none" stroke="#b5c4cd" strokeWidth="2" />
      <text
        x="519 524 512 518 525 527"
        y="651 656 664 671 674 685"
        className="fill-[#a9bac5] font-['Liberation_Sans'] text-[13px] italic"
      >
        8yHO-7
      </text>

      {/* right hole */}
      <ellipse cx="554" cy="717.500" rx="3.500" ry="16" fill="#d5e5ee" />
      <path d="M555 702C559 708 559 727 555 733" fill="none" stroke="#4d575d" />

      {/* sketched label floating in space */}
      <text
        x="823 827 816 820 829 831"
        y="597 603 612 621 625 633"
        className="fill-[#5ab4f5] font-['Liberation_Sans'] text-[14px] font-bold italic"
      >
        SyHO-7
      </text>
    </svg>
  );
}

export default function App() {
  return (
    <div className="flex h-screen flex-col overflow-hidden border-t-2 border-l-2 border-t-[#d9dfdf] border-l-[#a3a3a3] font-['Noto_Sans','Noto_Sans_CJK_SC',sans-serif] text-[12px] leading-4 whitespace-nowrap text-[#3a3a3a]">
      {/* Tab bar */}
      <nav className="flex h-[29px] shrink-0 bg-[#3e4647] text-[13px] text-white">
        <button className="bg-linear-to-b from-[#68d24a] to-[#4da735] px-5">文件</button>
        <div className="flex gap-px">
          <button className="bg-[#f8f9fb] px-[23px] text-[#478a2e]">模型</button>
          {tabs.map((tab) => (
            <button key={tab} className="px-[23px]">
              {tab}
            </button>
          ))}
        </div>
      </nav>

      <div className="shrink-0">
        <Ribbon />
      </div>

      <div className="flex min-h-0 flex-1">
        <ModelTree />

        <main className="relative min-w-0 flex-1 bg-linear-to-b from-[#005e9e] to-[#001234]">
          <PartModel />

          {/* Graphics toolbar */}
          <div className="absolute top-[7px] right-[22px] flex h-9 items-center border border-[#a9a9a9] bg-[#f8f9fb] px-[2px]">
            {graphicsTools.map((tool) => (
              <button
                key={tool.label}
                aria-label={tool.label}
                className={tool.menu ? "relative flex w-[31px] justify-center" : "flex w-[30px] justify-center"}
              >
                <svg viewBox="0 0 20 20" className="size-5">
                  {tool.icon}
                </svg>
                {tool.menu && (
                  <svg viewBox="0 0 4 4" className="absolute right-0 -bottom-[2px] size-1">
                    <path d="M4 0v4H0z" fill="#333" />
                  </svg>
                )}
              </button>
            ))}
          </div>

          {/* Watermark */}
          <div className="absolute right-[5px] bottom-[5px] flex h-[62px] items-center bg-[#5b6881] pr-1 pl-[2px]">
            <svg viewBox="0 0 56 56" className="size-14" fill="none" aria-hidden="true">
              <path d="M38 33C42 24 34 12 22 6 12 1 3 1 2 9c0 10 8 20 22 27-12-8-18-17-18-25 0-7 8-7 16-3 11 6 18 16 16 25z" fill="#1b4a7c" stroke="#1b4a7c" />
              <path d="M39 19c14-4 20 6 13 19-6 12-18 19-24 12 7 3 15-2 20-12 6-12 2-19-9-19z" fill="#8d1c46" stroke="#8d1c46" strokeWidth="1.500" />
              <path d="M27 32c-10-3-19 1-18 8 0 6 8 7 14 3-6 2-10 0-10-4 0-5 6-8 14-7z" fill="#3f5f85" stroke="#3f5f85" />
            </svg>
            <div className="flex flex-col items-center gap-1">
              <span className="text-[28px] leading-8 font-black text-[#056a50]">野火论坛</span>
              <span className="font-['DejaVu_Sans'] text-[14px] leading-4 text-[#3d7f93]">www.proewildfire.cn</span>
            </div>
          </div>
        </main>
      </div>
    </div>
  );
}
